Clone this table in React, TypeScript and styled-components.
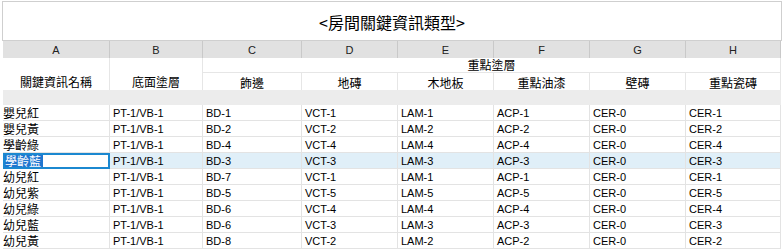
import styled, { createGlobalStyle, css } from 'styled-components';

const GlobalStyles = createGlobalStyle`
  html, body {
    margin: 0;
    padding: 0;
    background: #ffffff;
  }
  body {
    font-family: 'Liberation Sans', Arial, 'Noto Sans CJK TC', sans-serif;
  }
`;

const CJK = `'Noto Sans CJK TC', 'Noto Sans CJK SC', sans-serif`;

const COLUMN_WIDTHS = [107, 93, 99, 96, 96, 96, 96, 95];
const LETTERS = ['A', 'B', 'C', 'D', 'E', 'F', 'G', 'H'];
const SUB_HEADERS = ['飾邊', '地磚', '木地板', '重點油漆', '壁磚', '重點瓷磚'];

const ROWS: string[][] = [
  ['嬰兒紅', 'PT-1/VB-1', 'BD-1', 'VCT-1', 'LAM-1', 'ACP-1', 'CER-0', 'CER-1'],
  ['嬰兒黃', 'PT-1/VB-1', 'BD-2', 'VCT-2', 'LAM-2', 'ACP-2', 'CER-0', 'CER-2'],
  ['學齡綠', 'PT-1/VB-1', 'BD-4', 'VCT-4', 'LAM-4', 'ACP-4', 'CER-0', 'CER-4'],
  ['學齡藍', 'PT-1/VB-1', 'BD-3', 'VCT-3', 'LAM-3', 'ACP-3', 'CER-0', 'CER-3'],
  ['幼兒紅', 'PT-1/VB-1', 'BD-7', 'VCT-1', 'LAM-1', 'ACP-1', 'CER-0', 'CER-1'],
  ['幼兒紫', 'PT-1/VB-1', 'BD-5', 'VCT-5', 'LAM-5', 'ACP-5', 'CER-0', 'CER-5'],
  ['幼兒綠', 'PT-1/VB-1', 'BD-6', 'VCT-4', 'LAM-4', 'ACP-4', 'CER-0', 'CER-4'],
  ['幼兒藍', 'PT-1/VB-1', 'BD-6', 'VCT-3', 'LAM-3', 'ACP-3', 'CER-0', 'CER-3'],
  ['幼兒黃', 'PT-1/VB-1', 'BD-8', 'VCT-2', 'LAM-2', 'ACP-2', 'CER-0', 'CER-2'],
];

const SELECTED_ROW = 3;

const Page = styled('div')({
  width: '784px',
  height: '252px',
  boxSizing: 'border-box',
  padding: '1px 2px 0 2px',
  overflow: 'hidden',
});

const TitleBox = styled('div')({
  height: '40px',
  boxSizing: 'border-box',
  border: '1px solid #cfcfcf',
  display: 'flex',
  alignItems: 'center',
  justifyContent: 'center',
  fontFamily: CJK,
  fontSize: '16px',
  color: '#000',
  paddingTop: '1px',
});

const Sheet = styled('div')({
  marginLeft: '1px',
  display: 'grid',
  gridTemplateColumns: COLUMN_WIDTHS.map((w) => `${w}px`).join(' '),
  gridTemplateRows: '17px 15px 17px 15px repeat(9, 16px)',
});

const Letter = styled('div')({
  background: '#e1e1e1',
  borderRight: '1px solid #c9c9c9',
  boxSizing: 'border-box',
  display: 'flex',
  alignItems: 'center',
  justifyContent: 'center',
  fontSize: '11px',
  color: '#222',
  paddingTop: '1px',
});

const HeadCell = styled('div')<{ $span?: number; $tall?: boolean; $line?: boolean }>`
  box-sizing: border-box;
  display: flex;
  justify-content: center;
  align-items: flex-end;
  font-family: ${CJK};
  font-size: 12px;
  color: #000;
  line-height: 15px;
  border-right: 1px solid #e6e6e6;
  ${(p) => p.$span && css`grid-column: span ${p.$span};`}
  ${(p) => p.$tall && css`grid-row: span 2; padding-bottom: 1px;`}
  ${(p) => p.$line && css`border-bottom: 1px solid #e6e6e6;`}
`;

const Band = styled('div')({
  gridColumn: '1 / -1',
  background: '#ececec',
});

const Cell = styled('div')<{ $cjk?: boolean; $selected?: boolean; $active?: boolean }>`
  box-sizing: border-box;
  border-right: 1px solid #e3e3e3;
  border-bottom: 1px solid #e3e3e3;
  display: flex;
  align-items: center;
  padding-left: 3px;
  white-space: nowrap;
  overflow: hidden;
  color: #000;
  font-size: 11px;
  background: ${(p) => (p.$selected ? '#e0eff8' : '#fff')};
  ${(p) =>
    p.$cjk &&
    css`
      font-family: ${CJK};
      font-size: 12px;
      padding-left: 0;
    `}
  ${(p) =>
    p.$active &&
    css`
      background: #fff;
      border: 2px solid #1b88d0;
      padding-left: 0;
    `}
`;

const Highlight = styled('span')({
  background: '#1f76cf',
  color: '#fff',
  lineHeight: '12px',
  padding: '0 2px 0 0',
});

export default function App() {
  return (
    <Page>
      <GlobalStyles />
      <TitleBox>&lt;房間關鍵資訊類型&gt;</TitleBox>
      <Sheet>
        {LETTERS.map((l) => (
          <Letter key={l}>{l}</Letter>
        ))}
        <HeadCell $tall>關鍵資訊名稱</HeadCell>
        <HeadCell $tall>底面塗層</HeadCell>
        <HeadCell $span={6} $line>
          重點塗層
        </HeadCell>
        {SUB_HEADERS.map((h) => (
          <HeadCell key={h}>{h}</HeadCell>
        ))}
        <Band />
        {ROWS.map((row, r) =>
          row.map((value, c) => {
            const selected = r === SELECTED_ROW;
            if (c === 0) {
              return (
                <Cell key={`${r}-${c}`} $cjk $selected={selected} $active={selected}>
                  {selected ? <Highlight>{value}</Highlight> : value}
                </Cell>
              );
            }
            return (
              <Cell key={`${r}-${c}`} $selected={selected}>
                {value}
              </Cell>
            );
          })
        )}
      </Sheet>
    </Page>
  );
}
